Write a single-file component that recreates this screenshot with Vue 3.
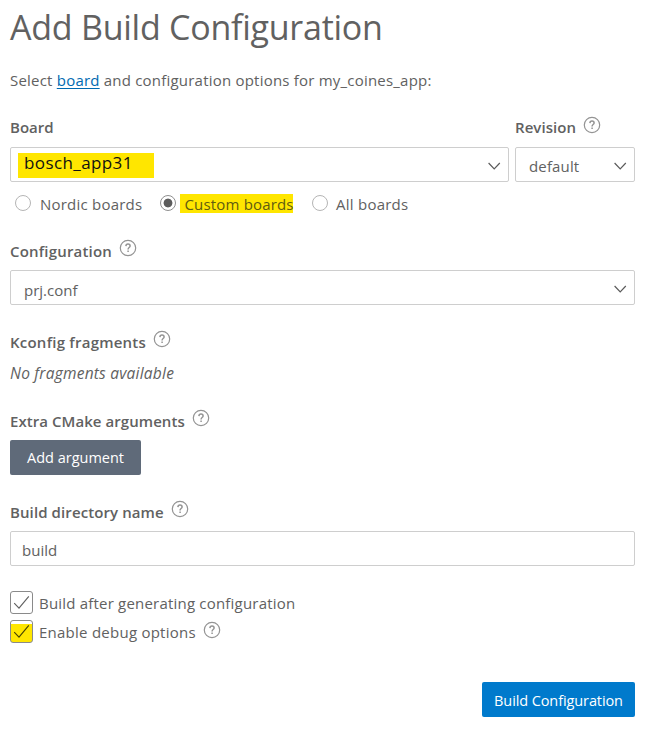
<script setup>
import { h } from 'vue'

const HelpIcon = () =>
  h('svg', { class: 'help', width: 18, height: 18, viewBox: '0 0 18 18', fill: 'none', stroke: '#949494' }, [
    h('circle', { cx: 9, cy: 9, r: 7.7, 'stroke-width': 1.2 }),
    h('path', { d: 'M6.9 7.1C7 5.8 7.9 5.1 9 5.1c1.2 0 2.1.7 2.1 1.8 0 1.5-2 1.7-2 3.3v.3', 'stroke-width': 1.5 }),
    h('path', { d: 'M9.1 11.6v1.5', 'stroke-width': 1.5 }),
  ])

const Chevron = () =>
  h('svg', { class: 'chevron', width: 14, height: 10, viewBox: '0 0 14 10', fill: 'none', stroke: '#5a5a5a', 'stroke-width': 1.2 }, [
    h('path', { d: 'M1.6 2 7.2 7.8 12.8 2' }),
  ])

const Check = () =>
  h('svg', { width: 17, height: 15, viewBox: '0 0 17 15', fill: 'none', stroke: 'currentColor', 'stroke-width': 1.15 }, [
    h('path', { d: 'M1.2 8.2 6 13.2 15.8 1.3' }),
  ])
</script>

<template>
  <main class="page">
    <h1>Add Build Configuration</h1>
    <p class="intro">Select <a>board</a> and configuration options for my_coines_app:</p>

    <div class="top-row">
      <section class="board">
        <div class="label"><span class="raised">Board</span></div>
        <div class="field select"><span class="mark board-mark">bosch_app31</span><Chevron /></div>
      </section>
      <section class="revision">
        <div class="label"><span class="raised t-revision">Revision</span><HelpIcon /></div>
        <div class="field select"><span class="value t-default">default</span><Chevron /></div>
      </section>
    </div>

    <div class="radios">
      <label class="r1"><i class="radio"></i><span class="t-nordic">Nordic boards</span></label>
      <label class="r2"><i class="radio on"></i><span class="mark custom-mark">Custom boards</span></label>
      <label class="r3"><i class="radio"></i><span class="t-all">All boards</span></label>
    </div>

    <section class="config">
      <div class="label"><span class="t-config">Configuration</span><HelpIcon /></div>
      <div class="field select"><span class="value">prj.conf</span><Chevron /></div>
    </section>

    <section class="kconfig">
      <div class="label"><span class="t-kconfig">Kconfig fragments</span><HelpIcon /></div>
      <div class="empty">No fragments available</div>
    </section>

    <section class="cmake">
      <div class="label"><span class="t-cmake">Extra CMake arguments</span><HelpIcon /></div>
      <button class="add">Add argument</button>
    </section>

    <section class="dir">
      <div class="label"><span class="t-dir">Build directory name</span><HelpIcon /></div>
      <div class="field"><span class="input-text">build</span></div>
    </section>

    <div class="checks">
      <label class="check"><i class="box"><Check /></i><span class="t-after">Build after generating configuration</span></label>
      <label class="check"><i class="box marked"><Check /></i><span class="t-debug">Enable debug options</span><HelpIcon /></label>
    </div>

    <footer><button class="build">Build Configuration</button></footer>
  </main>
</template>

<style>
body { margin: 0; background: #fff; }
</style>

<style scoped>
.page {
  box-sizing: border-box;
  width: 663px;
  height: 737px;
  padding: 6px 28px 0 10px;
  overflow: hidden;
  color: #616161;
  font: 15px/24px "Open Sans", "Noto Sans", sans-serif;
  white-space: nowrap;
}
h1 { margin: 0; height: 42px; font-size: 34px; line-height: 43px; font-weight: 400; letter-spacing: -0.25px; }
.intro { margin: 20px 0 0; height: 24px; letter-spacing: 0.21px; }
.intro a { color: #006ab1; text-decoration: underline; text-underline-offset: 2px; text-decoration-thickness: 1px; }
.top-row { display: flex; gap: 6px; margin-top: 24px; }
.board { width: 499px; }
.revision { width: 120px; }
.label { display: flex; height: 31px; font-weight: 600; }
.help { flex: none; margin-left: 7px; }
.raised { line-height: 22px; }
.t-revision { letter-spacing: 0.06px; }
.t-default { letter-spacing: 0.15px; }
.t-nordic { letter-spacing: 0.22px; }
.t-config { letter-spacing: 0.18px; }
.t-kconfig { letter-spacing: 0.23px; }
.t-cmake { letter-spacing: 0.06px; }
.t-dir { letter-spacing: 0.1px; }
.t-after { letter-spacing: 0.2px; }
.t-debug { letter-spacing: 0.25px; }
.field {
  box-sizing: border-box;
  display: flex;
  align-items: center;
  height: 35px;
  border: 1px solid #cecece;
  border-radius: 2px;
}
.select { justify-content: space-between; padding-right: 7px; }
.chevron { margin-top: 3px; }
.value { padding: 4px 0 0 13px; }
.t-default { padding-top: 2px; }
.input-text { padding: 2px 0 0 11px; }
.mark { background: #ffe600; }
.board-mark {
  box-sizing: border-box;
  width: 136px;
  height: 25px;
  margin: 1px 0 0 7px;
  padding-left: 6px;
  color: #111;
  font-size: 17px;
  line-height: 20px;
  letter-spacing: 0.4px;
}
.radios { display: flex; height: 24px; margin-top: 10px; }
.radios label { display: flex; }
.r1 { width: 145px; padding-left: 5px; }
.r2 { width: 151.5px; }
.radio {
  box-sizing: border-box;
  flex: none;
  width: 16px;
  height: 16px;
  margin-top: 3px;
  border: 1px solid #b5b5b5;
  border-radius: 50%;
}
.radio.on { border-color: #8f8f8f; background: radial-gradient(circle, #5c5c5c 4px, transparent 4.8px); }
.t-nordic { margin-left: 9px; }
.t-all { margin-left: 8.5px; letter-spacing: 0.25px; }
.custom-mark { box-sizing: border-box; width: 113px; height: 19px; margin: 2px 0 0 4px; padding-left: 4.5px; line-height: 21px; letter-spacing: 0.17px; color: #615c10; }
.config { margin-top: 23px; }
.kconfig { margin-top: 25px; }
.empty { height: 24px; font-style: italic; font-size: 15.5px; letter-spacing: 0.22px; }
.cmake { margin-top: 24px; }
button { display: block; box-sizing: border-box; height: 35px; padding: 2px 0 0; border: 0; border-radius: 2px; color: #fff; font: inherit; font-size: 14.5px; text-align: center; }
.add { width: 131px; padding: 0; background: #5f6a79; }
.dir { margin-top: 25px; }
.checks { margin-top: 25px; }
.check { display: flex; height: 29px; }
.check .help { margin-top: 1px; }
.box {
  box-sizing: border-box;
  display: flex;
  align-items: center;
  justify-content: center;
  flex: none;
  width: 23px;
  height: 23px;
  margin-right: 6px;
  border: 1px solid #8a8a8a;
  border-radius: 3px;
}
.marked { color: #494500; background: linear-gradient(#fff 3px, #ffe600 3px); }
footer { display: flex; justify-content: flex-end; margin-top: 33px; }
.build { width: 153px; background: #007acc; letter-spacing: -0.1px; }
</style>
